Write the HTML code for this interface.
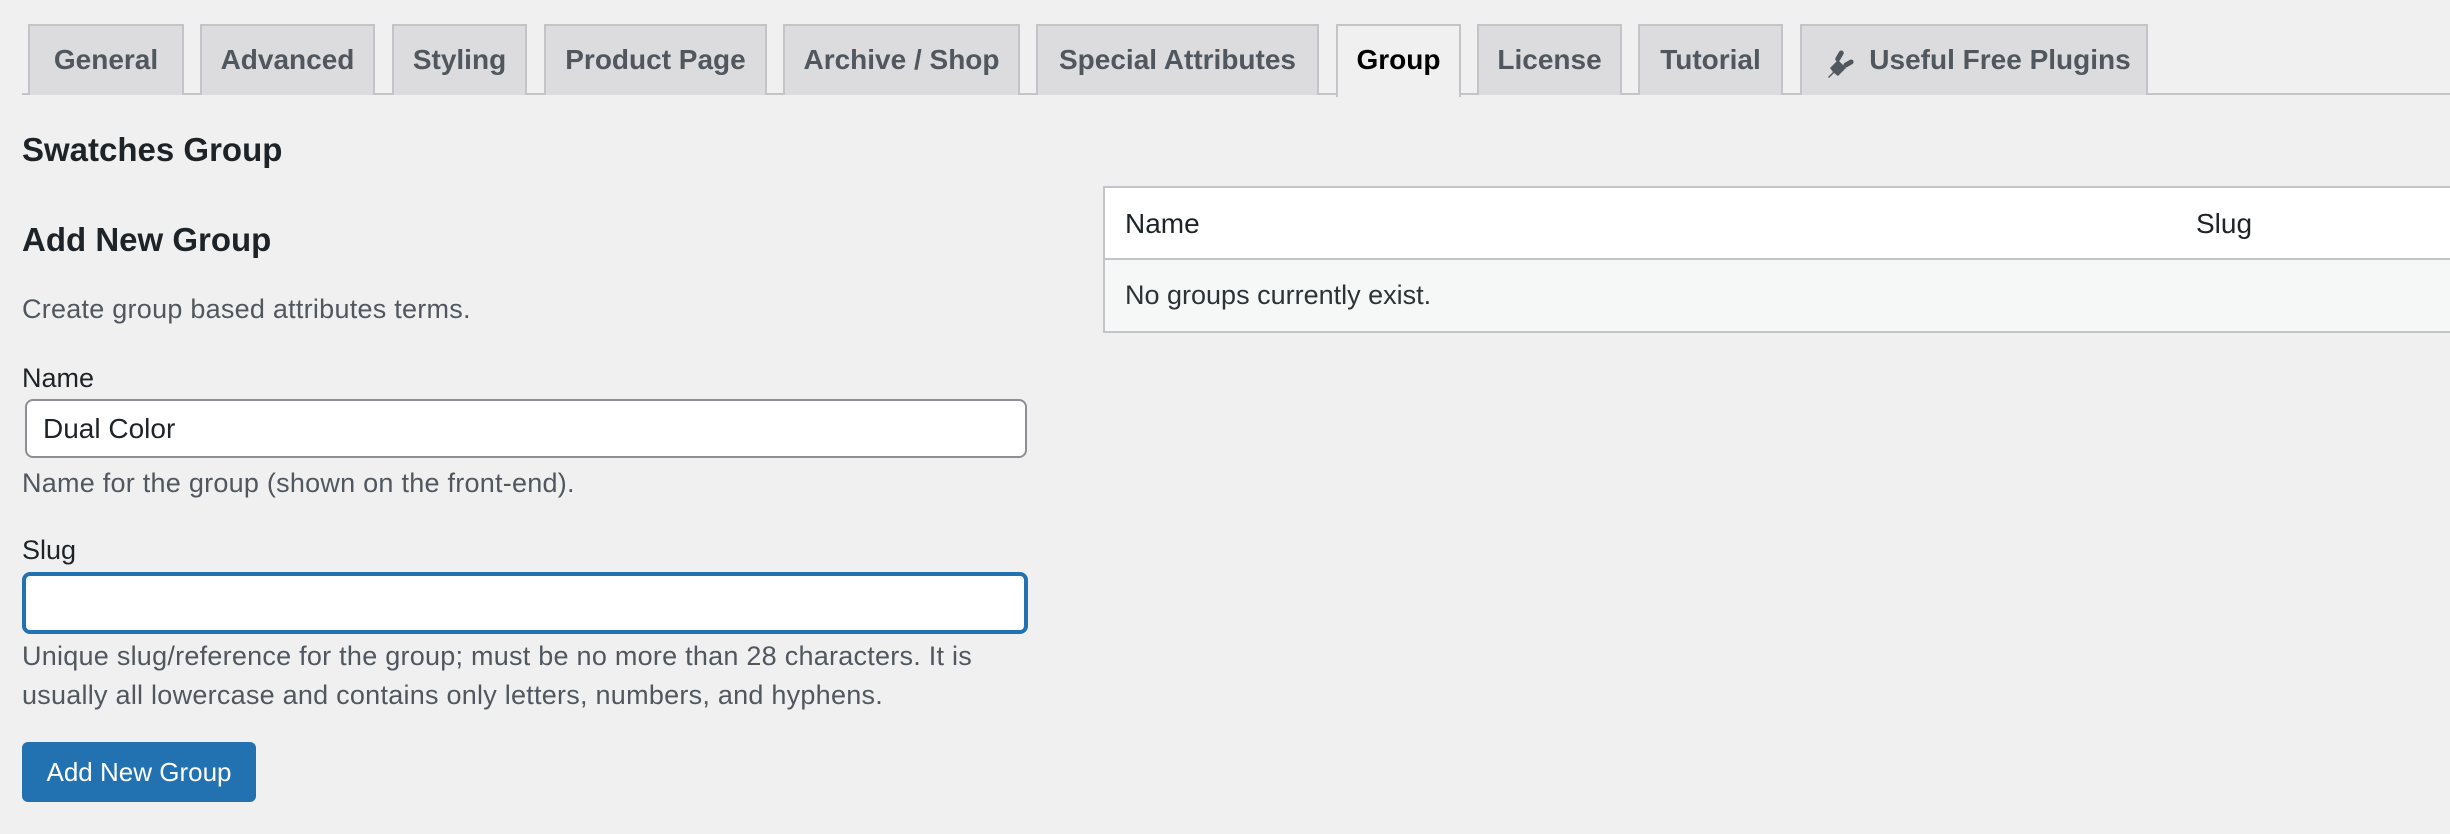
<!DOCTYPE html>
<html><head><meta charset="utf-8"><style>
*{box-sizing:border-box;margin:0;padding:0}
body{width:2450px;height:834px;background:#f0f0f1;font-family:"Liberation Sans",sans-serif;color:#1d2327;position:relative;overflow:hidden}
.a{position:absolute;white-space:nowrap}
.tab{position:absolute;top:24px;height:71px;background:#dcdcde;border:2px solid #c3c4c7;border-bottom:none;color:#50575e;font-weight:bold;font-size:28px;line-height:68px;text-align:center}
.tab.on{background:#f0f0f1;color:#000;height:73px}
.line{position:absolute;left:22px;right:0;top:93px;height:2px;background:#c3c4c7}
.p{font-size:27px;color:#50575e;letter-spacing:0.25px}
.lbl{font-size:27px;color:#1d2327}
</style></head><body>
<div class="line"></div>
<div class="tab" style="left:28px;width:156px">General</div>
<div class="tab" style="left:200px;width:175px">Advanced</div>
<div class="tab" style="left:392px;width:135px">Styling</div>
<div class="tab" style="left:544px;width:223px">Product Page</div>
<div class="tab" style="left:783px;width:237px">Archive / Shop</div>
<div class="tab" style="left:1036px;width:283px">Special Attributes</div>
<div class="tab on" style="left:1336px;width:125px">Group</div>
<div class="tab" style="left:1477px;width:145px">License</div>
<div class="tab" style="left:1638px;width:145px">Tutorial</div>
<div class="tab" style="left:1800px;width:348px;padding-left:52px">
<svg style="position:absolute;left:22px;top:20px" width="34" height="34" viewBox="0 0 34 34"><g fill="#50575e"><path d="M4 31 L9 26 L6 22 L14 14 L22 22 L14 30 L10 27 L5 32 Z"/><rect x="13" y="4" width="5" height="12" rx="2.5" transform="rotate(30 15.5 10)"/><rect x="22" y="12" width="5" height="11" rx="2.5" transform="rotate(60 24.5 17.5)"/></g></svg>Useful Free Plugins</div>

<div class="a" style="left:22px;top:131px;font-size:33px;font-weight:bold">Swatches Group</div>
<div class="a" style="left:22px;top:221px;font-size:33px;font-weight:bold">Add New Group</div>
<div class="a p" style="left:22px;top:294px">Create group based attributes terms.</div>
<div class="a lbl" style="left:22px;top:363px">Name</div>
<div class="a" style="left:25px;top:399px;width:1002px;height:59px;background:#fff;border:2px solid #8c8f94;border-radius:8px;font-size:28px;padding-left:16px;line-height:55px;color:#1d2327">Dual Color</div>
<div class="a p" style="left:22px;top:468px">Name for the group (shown on the front-end).</div>
<div class="a lbl" style="left:22px;top:535px">Slug</div>
<div class="a" style="left:22px;top:572px;width:1006px;height:62px;background:#fff;border:4px solid #2271b1;border-radius:8px"></div>
<div class="a p" style="left:22px;top:641px">Unique slug/reference for the group; must be no more than 28 characters. It is</div>
<div class="a p" style="left:22px;top:680px">usually all lowercase and contains only letters, numbers, and hyphens.</div>
<div class="a" style="left:22px;top:742px;width:234px;height:60px;background:#2271b1;border-radius:6px;color:#fff;font-size:26px;line-height:60px;text-align:center">Add New Group</div>

<div class="a" style="left:1103px;top:186px;width:1360px;height:147px;border:2px solid #c3c4c7;background:#fff">
<div style="height:72px;border-bottom:2px solid #c3c4c7;position:relative;font-size:28px;line-height:72px">
<span style="position:absolute;left:20px">Name</span><span style="position:absolute;left:1091px">Slug</span></div>
<div style="height:71px;background:#f6f7f7;font-size:27px;line-height:71px;padding-left:20px;color:#2c3338">No groups currently exist.</div>
</div>
</body></html>
